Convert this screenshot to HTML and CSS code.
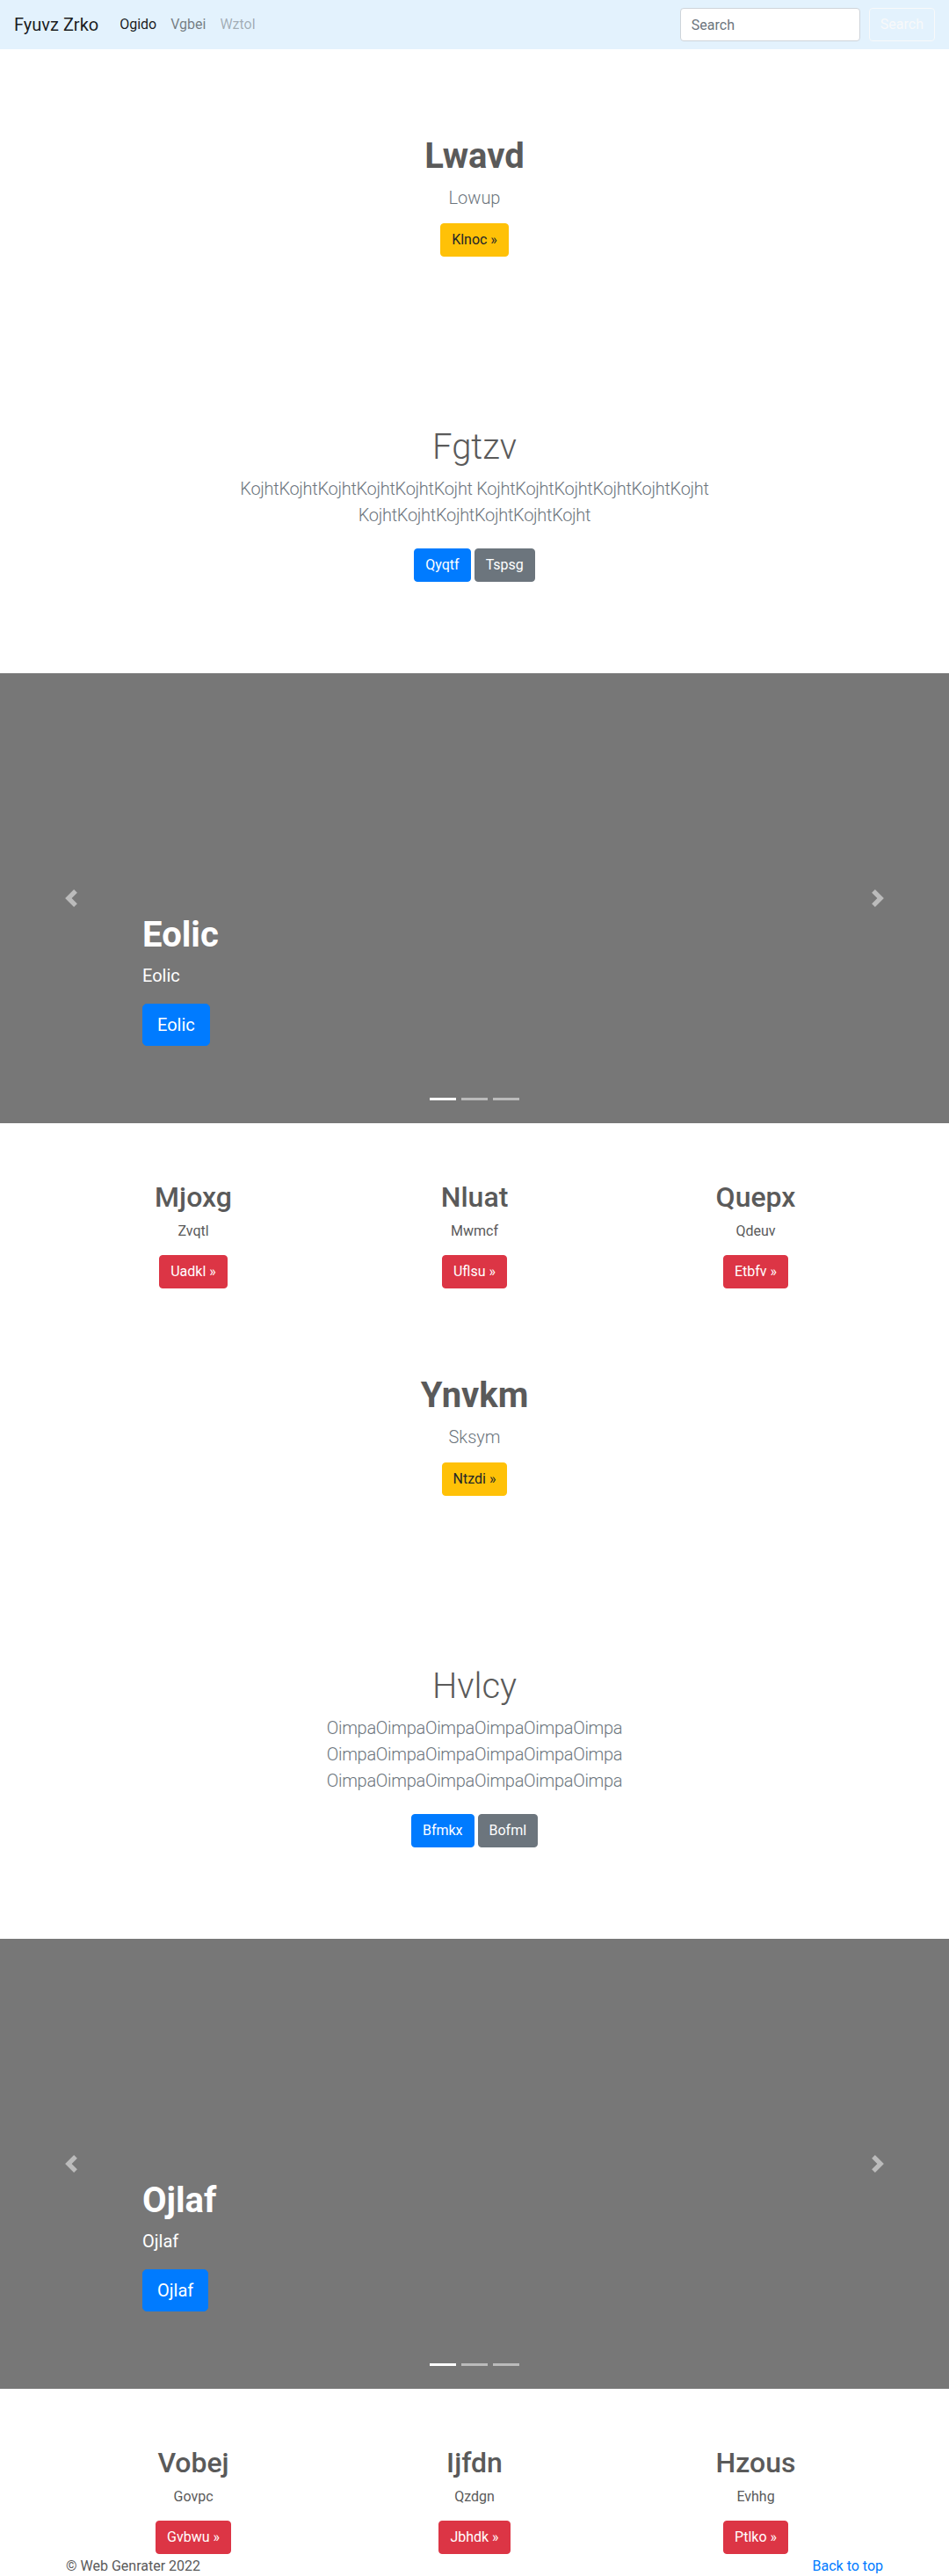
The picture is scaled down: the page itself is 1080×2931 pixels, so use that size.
FILE: index.html
```html
<!DOCTYPE html>
<html lang="en">
<head>
<meta charset="utf-8">
<title>Fyuvz Zrko</title>
<link rel="stylesheet" href="styles.css">
</head>
<body>
<nav class="navbar">
  <a class="brand" href="#">Fyuvz Zrko</a>
  <ul class="nav">
    <li><a class="nav-link active" href="#">Ogido</a></li>
    <li><a class="nav-link" href="#">Vgbei</a></li>
    <li><a class="nav-link disabled" href="#">Wztol</a></li>
  </ul>
  <form class="search">
    <input class="search-input" type="search" placeholder="Search">
    <button class="search-btn" type="button">Search</button>
  </form>
</nav>

<section class="hero-a">
  <h1 class="title-bold">Lwavd</h1>
  <p class="lead muted">Lowup</p>
  <a class="btn btn-warning" href="#">Klnoc »</a>
</section>

<section class="hero-b">
  <h1 class="title-light">Fgtzv</h1>
  <p class="lead muted wrap">KojhtKojhtKojhtKojhtKojhtKojht KojhtKojhtKojhtKojhtKojhtKojht KojhtKojhtKojhtKojhtKojhtKojht</p>
  <div class="btn-row">
    <a class="btn btn-primary" href="#">Qyqtf</a>
    <a class="btn btn-secondary" href="#">Tspsg</a>
  </div>
</section>

<div class="carousel">
  <div class="caption">
    <h1 class="caption-title">Eolic</h1>
    <p class="caption-text">Eolic</p>
    <a class="btn btn-lg btn-primary" href="#">Eolic</a>
  </div>
  <a class="control prev" href="#"><svg viewBox="0 0 8 8" width="20" height="20"><path d="M5.25 0l-4 4 4 4 1.5-1.5L4.25 4l2.5-2.5L5.25 0z"/></svg></a>
  <a class="control next" href="#"><svg viewBox="0 0 8 8" width="20" height="20"><path d="M2.75 0l-1.5 1.5L3.75 4l-2.5 2.5L2.75 8l4-4-4-4z"/></svg></a>
  <ol class="indicators"><li class="on"></li><li></li><li></li></ol>
</div>

<section class="marketing">
  <div class="row">
    <div class="col"><h2>Mjoxg</h2><p>Zvqtl</p><a class="btn btn-danger" href="#">Uadkl »</a></div>
    <div class="col"><h2>Nluat</h2><p>Mwmcf</p><a class="btn btn-danger" href="#">Uflsu »</a></div>
    <div class="col"><h2>Quepx</h2><p>Qdeuv</p><a class="btn btn-danger" href="#">Etbfv »</a></div>
  </div>
</section>

<section class="hero-a">
  <h1 class="title-bold">Ynvkm</h1>
  <p class="lead muted">Sksym</p>
  <a class="btn btn-warning" href="#">Ntzdi »</a>
</section>

<section class="hero-b">
  <h1 class="title-light">Hvlcy</h1>
  <p class="lead muted wrap">OimpaOimpaOimpaOimpaOimpaOimpa OimpaOimpaOimpaOimpaOimpaOimpa OimpaOimpaOimpaOimpaOimpaOimpa</p>
  <div class="btn-row">
    <a class="btn btn-primary" href="#">Bfmkx</a>
    <a class="btn btn-secondary" href="#">Bofml</a>
  </div>
</section>

<div class="carousel">
  <div class="caption">
    <h1 class="caption-title">Ojlaf</h1>
    <p class="caption-text">Ojlaf</p>
    <a class="btn btn-lg btn-primary" href="#">Ojlaf</a>
  </div>
  <a class="control prev" href="#"><svg viewBox="0 0 8 8" width="20" height="20"><path d="M5.25 0l-4 4 4 4 1.5-1.5L4.25 4l2.5-2.5L5.25 0z"/></svg></a>
  <a class="control next" href="#"><svg viewBox="0 0 8 8" width="20" height="20"><path d="M2.75 0l-1.5 1.5L3.75 4l-2.5 2.5L2.75 8l4-4-4-4z"/></svg></a>
  <ol class="indicators"><li class="on"></li><li></li><li></li></ol>
</div>

<section class="marketing">
  <div class="row">
    <div class="col"><h2>Vobej</h2><p>Govpc</p><a class="btn btn-danger" href="#">Gvbwu »</a></div>
    <div class="col"><h2>Ijfdn</h2><p>Qzdgn</p><a class="btn btn-danger" href="#">Jbhdk »</a></div>
    <div class="col"><h2>Hzous</h2><p>Evhhg</p><a class="btn btn-danger" href="#">Ptlko »</a></div>
  </div>
</section>

<footer class="footer">
  <p class="copy">© Web Genrater 2022</p>
  <p class="top-link"><a href="#">Back to top</a></p>
</footer>
</body>
</html>
```

FILE: styles.css
```css
* { box-sizing: border-box; }

html, body {
  margin: 0;
  padding: 0;
}

body {
  font-family: Roboto, "Liberation Sans", Arial, sans-serif;
  font-size: 16px;
  line-height: 24px;
  color: #5a5a5a;
  background: #fff;
}

a { text-decoration: none; }

/* ---------- navbar ---------- */
.navbar {
  display: flex;
  align-items: center;
  height: 56px;
  padding: 8px 16px;
  background: #e3f2fd;
}

.brand {
  font-size: 20px;
  line-height: 30px;
  padding: 5px 0;
  margin-right: 16px;
  color: rgba(0, 0, 0, 0.9);
}

.nav {
  display: flex;
  flex: 1;
  list-style: none;
  margin: 0;
  padding: 0;
}

.nav-link {
  display: block;
  padding: 8px;
  color: rgba(0, 0, 0, 0.5);
}

.nav-link.active { color: rgba(0, 0, 0, 0.9); }
.nav-link.disabled { color: rgba(0, 0, 0, 0.3); }

.search {
  display: flex;
  align-items: center;
  margin: 0;
}

.search-input {
  width: 205px;
  height: 38px;
  margin-right: 10px;
  padding: 6px 12px;
  font-family: inherit;
  font-size: 16px;
  color: #495057;
  background: #fff;
  border: 1px solid #ced4da;
  border-radius: 4px;
}

.search-input::placeholder { color: #6c757d; }

.search-btn {
  height: 38px;
  padding: 6px 12px;
  font-family: inherit;
  font-size: 16px;
  line-height: 24px;
  color: #f8f9fa;
  background: transparent;
  border: 1px solid #f8f9fa;
  border-radius: 4px;
}

/* ---------- buttons ---------- */
.btn {
  display: inline-block;
  padding: 6px 12px;
  font-size: 16px;
  line-height: 24px;
  border: 1px solid transparent;
  border-radius: 4px;
  color: #fff;
  text-align: center;
  vertical-align: middle;
}

.btn-lg {
  padding: 8px 16px;
  font-size: 20px;
  line-height: 30px;
  border-radius: 5px;
}

.btn-warning { background: #ffc107; border-color: #ffc107; color: #212529; }
.btn-primary { background: #007bff; border-color: #007bff; }
.btn-secondary { background: #6c757d; border-color: #6c757d; }
.btn-danger { background: #dc3545; border-color: #dc3545; }

/* ---------- heroes ---------- */
.hero-a, .hero-b {
  display: flex;
  flex-direction: column;
  align-items: center;
  text-align: center;
}

.hero-a { padding: 98px 16px 89px; }
.hero-b { padding: 104px 16px 104px; }

.title-bold, .title-light, .caption-title {
  margin: 0;
  font-size: 40px;
  line-height: 48px;
}

.title-bold { font-weight: 700; color: #5a5a5a; }
.title-light { font-weight: 300; color: #5a5a5a; }

.lead {
  font-size: 20px;
  line-height: 30px;
  font-weight: 300;
  margin: 0;
}

.muted { color: #6c757d; }

.hero-a .lead { margin: 8px 0 14px; }

.hero-b .lead {
  margin: 8px 0 23px;
  max-width: 600px;
  letter-spacing: -0.3px;
}

.btn-row {
  display: flex;
  gap: 4px;
  justify-content: center;
}

/* ---------- carousel ---------- */
.carousel {
  position: relative;
  height: 512px;
  background: #777;
}

.caption {
  position: absolute;
  left: 15%;
  right: 15%;
  bottom: 48px;
  padding-bottom: 20px;
  color: #fff;
  text-align: left;
  z-index: 2;
}

.caption-title {
  font-weight: 700;
  color: #fff;
}

.caption-text {
  margin: 7px 0 17px;
  font-size: 20px;
  line-height: 30px;
}

.caption .btn { margin-bottom: 20px; }

.control {
  position: absolute;
  top: 0;
  bottom: 0;
  width: 15%;
  display: flex;
  align-items: center;
  justify-content: center;
  opacity: 0.5;
  fill: #fff;
}

.control.prev { left: 0; }
.control.next { right: 0; }

.indicators {
  position: absolute;
  left: 0;
  right: 0;
  bottom: 0;
  display: flex;
  justify-content: center;
  list-style: none;
  margin: 0 0 16px;
  padding: 0;
}

.indicators li {
  width: 30px;
  height: 23px;
  margin: 0 3px;
  border-top: 10px solid transparent;
  border-bottom: 10px solid transparent;
  background: #fff;
  background-clip: padding-box;
  opacity: 0.5;
}

.indicators li.on { opacity: 1; }

/* ---------- marketing ---------- */
.marketing {
  width: 960px;
  margin: 0 auto;
  padding: 65px 15px 0;
}

.row {
  display: grid;
  grid-template-columns: repeat(3, 1fr);
  margin: 0 -15px;
}

.col {
  padding: 0 15px;
  text-align: center;
}

.col h2 {
  margin: 0 0 8px;
  font-size: 32px;
  line-height: 38px;
  font-weight: 500;
  color: #5a5a5a;
}

.col p {
  margin: 0 0 15px;
}

/* ---------- footer ---------- */
.footer {
  width: 960px;
  margin: 0 auto;
  padding: 2px 15px 0;
  display: flex;
  justify-content: space-between;
}

.footer p { margin: 0; }

.top-link a { color: #007bff; }
```
